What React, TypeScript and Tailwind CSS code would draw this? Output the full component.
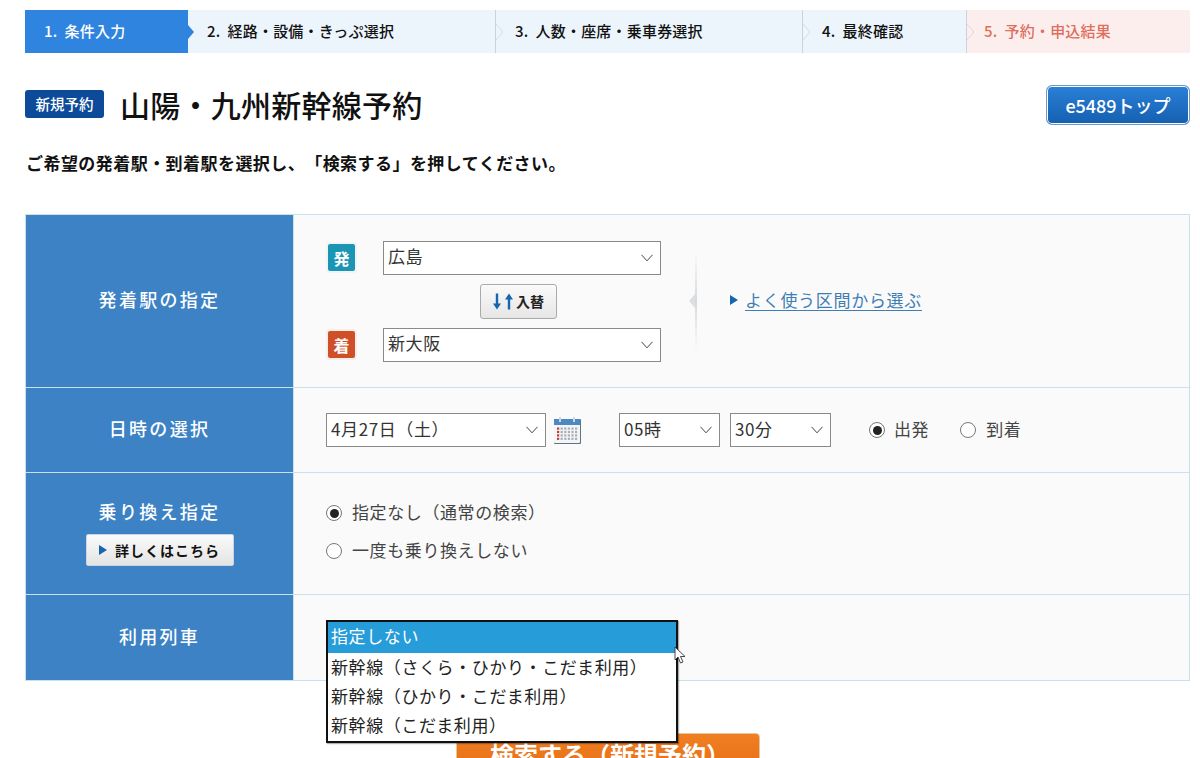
import type { ReactNode } from "react"

const steps = [
  { label: "1.  条件入力", width: "w-[163px]", className: "bg-[#2f84e0] text-white pl-[19px] z-10" },
  { label: "2.  経路・設備・きっぷ選択", width: "w-[307px]", className: "bg-[#edf5fc] text-[#111] pl-[19px]" },
  { label: "3.  人数・座席・乗車券選択", width: "w-[307px]", className: "bg-[#edf5fc] text-[#111] pl-[19px] border-l border-[#ccd3d8]" },
  { label: "4.  最終確認", width: "w-[164px]", className: "bg-[#edf5fc] text-[#111] pl-[19px] border-l border-[#ccd3d8]" },
  { label: "5.  予約・申込結果", width: "w-[224px]", className: "bg-[#fdeeee] text-[#dd6f5c] pl-[17px] border-l border-[#ccd3d8]" },
]

function Chevron() {
  return (
    <svg width="12" height="8" viewBox="0 0 12 8" className="absolute right-[7px] top-1/2 -translate-y-1/2" fill="none">
      <path d="M0.5 0.8L6 6.8L11.5 0.8" stroke="#444" strokeWidth="1" />
    </svg>
  )
}

function Select({ value, width, pad = "pl-[4px]" }: { value: string; width: string; pad?: string }) {
  return (
    <div className={`relative ${width} h-[34px] bg-white border border-[#8a8a8a] ${pad} pb-[3px] flex items-center text-[17px] tracking-[0.6px] text-[#333]`}>
      {value}
      <Chevron />
    </div>
  )
}

function Radio({ checked = false }: { checked?: boolean }) {
  return (
    <span className="w-[16px] h-[16px] shrink-0 rounded-full border border-[#777] bg-white flex items-center justify-center">
      {checked && <span className="w-[9px] h-[9px] rounded-full bg-[#222]" />}
    </span>
  )
}

function Row({ label, height, last = false, children }: { label: ReactNode; height: string; last?: boolean; children: ReactNode }) {
  return (
    <div className={`flex ${height} ${last ? "" : "border-b border-[#c9e2ea]"}`}>
      <div className="w-[267px] shrink-0 bg-[#3c82c4] text-white flex flex-col items-center justify-center pb-[3px] text-[18px] font-medium tracking-[2.3px]">
        {label}
      </div>
      <div className="flex-1 bg-[#fafafa] border-l border-[#c9e2ea] pl-[32px]">{children}</div>
    </div>
  )
}

function Triangle() {
  return <span className="w-0 h-0 border-y-[5px] border-y-transparent border-l-[8px] border-l-[#1565b0] shrink-0" />
}

function CalendarIcon() {
  return (
    <svg width="29" height="29" viewBox="0 0 29 29">
      <rect x="1" y="3" width="27" height="25" rx="1" fill="#5f7388" />
      <rect x="1" y="3" width="26" height="24" rx="1" fill="#f4f5f6" />
      <rect x="1" y="3" width="26" height="6" fill="#4c88c4" />
      <rect x="6" y="1" width="2" height="5" fill="#cfd8e0" />
      <rect x="20" y="1" width="2" height="5" fill="#cfd8e0" />
      {[0, 1, 2, 3].map((r) =>
        [0, 1, 2, 3, 4, 5].map((c) => (
          <rect key={`${r}-${c}`} x={4 + c * 3.6} y={11.5 + r * 3.4} width="2.2" height="2.2" fill={c === 0 ? "#c33a3a" : "#a9afb6"} />
        )),
      )}
    </svg>
  )
}

export default function App() {
  return (
    <div className="relative h-[758px] overflow-hidden bg-white pl-[25px] pr-[10px] pt-[10px] font-['Noto_Sans_CJK_JP','Noto_Sans',sans-serif] text-[#111] [text-spacing-trim:space-all]">
      <div className="flex w-[1165px] h-[43px] text-[15px] font-medium whitespace-pre">
        {steps.map((step, i) => (
          <div key={step.label} className={`relative ${step.width} ${step.className} flex items-center pb-[1px] tracking-[0.2px]`}>
            {step.label}
            {i === 0 && (
              <span className="absolute left-full top-1/2 -translate-y-1/2 w-0 h-0 border-y-[7px] border-y-transparent border-l-[6px] border-l-[#2f84e0]" />
            )}
            {i > 1 && (
              <svg width="8" height="16" viewBox="0 0 8 16" className="absolute left-0 top-1/2 -translate-y-1/2" fill="none">
                <path d="M0 0L7 8L0 16" stroke="#d5dbdf" />
              </svg>
            )}
          </div>
        ))}
      </div>

      <div className="flex items-start justify-between mt-[32px] h-[40px]">
        <div className="flex items-start">
          <span className="mt-[5px] w-[79px] h-[28px] rounded-[3px] bg-[#0d4a99] text-white text-[14.5px] font-medium flex items-center justify-center">
            新規予約
          </span>
          <h1 className="ml-[16px] text-[30px] leading-[40px] font-medium tracking-[0.25px] text-[#111] mt-[-1px]">山陽・九州新幹線予約</h1>
        </div>
        <button className="w-[144px] h-[40px] rounded-[6px] border border-[#6b9ac8] shadow-[inset_0_0_0_1px_#ffffff] bg-gradient-to-b from-[#2a80d8] to-[#1560b0] text-white text-[18px] font-medium">
          e5489トップ
        </button>
      </div>

      <p className="mt-[25px] ml-[1px] text-[17px] leading-[26px] font-bold tracking-[0.45px] text-[#111]">
        ご希望の発着駅・到着駅を選択し、「検索する」を押してください。
      </p>

      <div className="mt-[38px] w-[1165px] border border-[#c9e2ea]">
        <Row label="発着駅の指定" height="h-[173px]">
          <div className="flex h-full items-center">
            <div className="flex flex-col w-[335px]">
              <div className="flex items-center">
                <span className="w-[31px] h-[31px] rounded-[4px] bg-[#1a96b4] border-2 border-[#f0f4f5] text-white text-[16px] font-bold flex items-center justify-center">
                  発
                </span>
                <div className="ml-[26px]">
                  <Select value="広島" width="w-[278px]" />
                </div>
              </div>
              <button className="self-start ml-[154px] mt-[9px] w-[77px] h-[35px] rounded-[3px] border border-[#aaa] bg-gradient-to-b from-[#fafafa] to-[#e6e6e6] flex items-center justify-center gap-[3px] text-[14px] font-bold text-[#222]">
                <svg width="20" height="17" viewBox="0 0 20 17" fill="#1565b0">
                  <path d="M2.8 0.5h2.4V10.5H8L4 16.5L0 10.5h2.8z" />
                  <path d="M14.8 16.5h2.4V6.5H20L16 0.5L12 6.5h2.8z" />
                </svg>
                入替
              </button>
              <div className="flex items-center mt-[9px]">
                <span className="w-[31px] h-[31px] rounded-[4px] bg-[#cf4f28] border-2 border-[#f5eeeb] text-white text-[16px] font-bold flex items-center justify-center">
                  着
                </span>
                <div className="ml-[26px]">
                  <Select value="新大阪" width="w-[278px]" />
                </div>
              </div>
            </div>
            <div className="relative ml-[34px] w-[2px] h-[100px] bg-gradient-to-b from-[#fafafa] via-[#d6d9db] to-[#fafafa]">
              <span className="absolute left-[-6px] top-1/2 -translate-y-1/2 w-0 h-0 border-y-[7px] border-y-transparent border-r-[6px] border-r-[#dcdfe1]" />
            </div>
            <div className="ml-[33px] pb-[2px] flex items-center gap-[7px] text-[17px] tracking-[0.7px] text-[#3f7eb5]">
              <Triangle />
              <a className="underline underline-offset-[3px]">よく使う区間から選ぶ</a>
            </div>
          </div>
        </Row>

        <Row label="日時の選択" height="h-[85px]">
          <div className="flex h-full items-center">
            <Select value="4月27日（土）" width="w-[220px]" />
            <div className="ml-[7px] w-[29px]">
              <CalendarIcon />
            </div>
            <div className="ml-[37px]">
              <Select value="05時" width="w-[101px]" />
            </div>
            <div className="ml-[10px]">
              <Select value="30分" width="w-[101px]" />
            </div>
            <label className="ml-[38px] flex items-center gap-[9px] text-[17px] tracking-[0.6px] text-[#444]">
              <Radio checked />
              <span className="pb-[3px]">出発</span>
            </label>
            <label className="ml-[31px] flex items-center gap-[10px] text-[17px] tracking-[0.6px] text-[#444]">
              <Radio />
              <span className="pb-[3px]">到着</span>
            </label>
          </div>
        </Row>

        <Row
          label={
            <>
              <span>乗り換え指定</span>
              <button className="mt-[9px] w-[148px] h-[32px] rounded-[2px] bg-gradient-to-b from-[#fafafa] to-[#e4e4e4] border border-[#c9d6e0] flex items-center justify-center gap-[8px] text-[14px] font-bold tracking-[1px] text-[#111]">
                <Triangle />
                詳しくはこちら
              </button>
            </>
          }
          height="h-[122px]"
        >
          <div className="flex h-full flex-col justify-center gap-[16px] text-[17px] tracking-[0.6px] text-[#444] pb-[3px]">
            <label className="flex items-center gap-[10px] h-[22px]">
              <Radio checked />
              <span className="pb-[3px]">指定なし（通常の検索）</span>
            </label>
            <label className="flex items-center gap-[10px] h-[22px]">
              <Radio />
              <span className="pb-[3px]">一度も乗り換えしない</span>
            </label>
          </div>
        </Row>

        <Row label="利用列車" height="h-[85px]" last>
          <div />
        </Row>
      </div>

      <button className="absolute left-[456px] top-[733px] w-[304px] h-[60px] rounded-[4px] border border-[#e8c49c] bg-gradient-to-b from-[#f07f22] to-[#e2660c] text-white text-[24px] font-bold text-left pl-[33px] pt-[6px] leading-[28px] flex items-start">
        検索する（新規予約）
        <span className="absolute right-[16px] top-[12px] text-[18px]">›</span>
      </button>

      <div className="absolute left-[326px] top-[620px] w-[352px] h-[123px] bg-white border-2 border-[#111] text-[17px] tracking-[0.6px] text-[#222] shadow-[1px_1px_1px_rgba(0,0,0,0.3)]">
        <div className="h-[31px] bg-[#269cd9] text-white pl-[3px] pb-[3px] flex items-center">指定しない</div>
        <div className="h-[30px] pl-[3px] pb-[3px] flex items-center">新幹線（さくら・ひかり・こだま利用）</div>
        <div className="h-[29px] pl-[3px] pb-[3px] flex items-center">新幹線（ひかり・こだま利用）</div>
        <div className="h-[29px] pl-[3px] pb-[3px] flex items-center">新幹線（こだま利用）</div>
      </div>

      <svg width="12" height="18" viewBox="0 0 12 18" className="absolute left-[674px] top-[646px]">
        <path d="M1 1V14L4 11L6.5 17L9 16L6.5 10.5H11Z" fill="#fff" stroke="#333" strokeWidth="0.9" />
      </svg>
    </div>
  )
}
